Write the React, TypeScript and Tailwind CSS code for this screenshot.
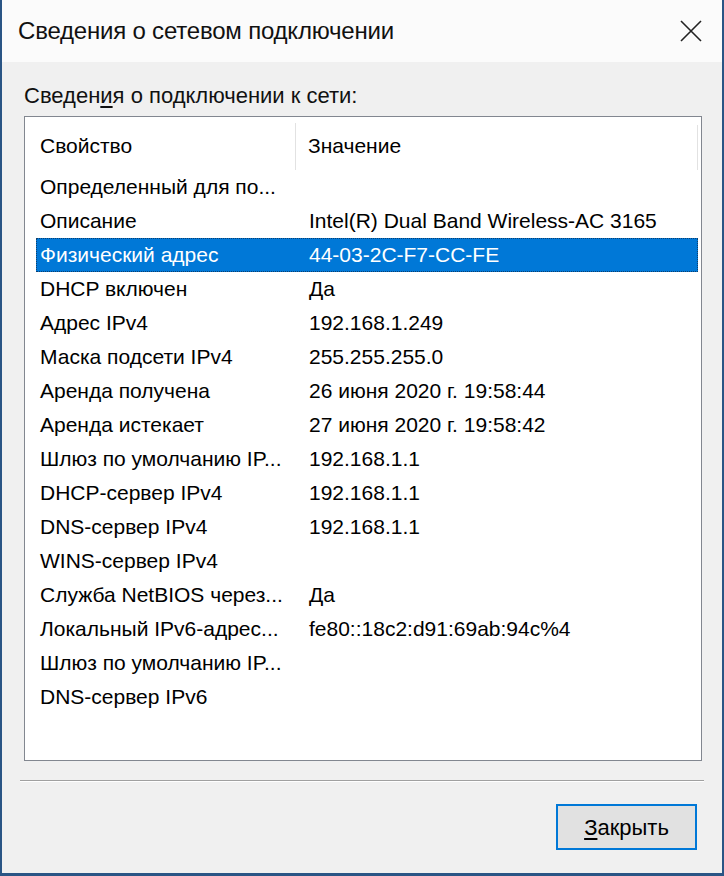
import React from "react";

const rows: [string, string][] = [
  ["Определенный для по...", ""],
  ["Описание", "Intel(R) Dual Band Wireless-AC 3165"],
  ["Физический адрес", "44-03-2C-F7-CC-FE"],
  ["DHCP включен", "Да"],
  ["Адрес IPv4", "192.168.1.249"],
  ["Маска подсети IPv4", "255.255.255.0"],
  ["Аренда получена", "26 июня 2020 г. 19:58:44"],
  ["Аренда истекает", "27 июня 2020 г. 19:58:42"],
  ["Шлюз по умолчанию IP...", "192.168.1.1"],
  ["DHCP-сервер IPv4", "192.168.1.1"],
  ["DNS-сервер IPv4", "192.168.1.1"],
  ["WINS-сервер IPv4", ""],
  ["Служба NetBIOS через...", "Да"],
  ["Локальный IPv6-адрес...", "fe80::18c2:d91:69ab:94c%4"],
  ["Шлюз по умолчанию IP...", ""],
  ["DNS-сервер IPv6", ""],
];

export default function App() {
  return (
    <div
      className="w-[724px] h-[876px] flex flex-col bg-[#f0f0f0] border-x-2 border-b-[3px] border-[#2a5585] text-[#000]"
      style={{ fontFamily: '"Liberation Sans", Arial, sans-serif' }}
    >
      {/* Title bar */}
      <div className="h-[62px] bg-[#fbfbfb] flex items-center justify-between pl-[16px] pr-[18px] shrink-0">
        <span className="text-[24px] tracking-[-0.2px] text-[#111]">Сведения о сетевом подключении</span>
        <svg width="22" height="22" viewBox="0 0 22 22" className="mr-[2px]">
          <path d="M1 1 L21 21 M21 1 L1 21" stroke="#222" strokeWidth="1.6" fill="none" />
        </svg>
      </div>

      {/* Body */}
      <div className="flex-1 flex flex-col px-[22px]">
        <div className="pt-[21px] h-[54px] text-[22px] leading-[26px] text-[#111]">
          Сведен<span className="underline underline-offset-[3px]">и</span>я о подключении к сети:
        </div>

        {/* List box */}
        <div className="w-[678px] h-[645px] bg-white border border-[#828790] flex flex-col">
          {/* Header */}
          <div className="h-[53px] flex items-stretch shrink-0">
            <div className="w-[270px] pl-[15px] flex items-center pt-[4px] text-[21px]">Свойство</div>
            <div className="w-[1px] bg-[#e2e2e2] mt-[6px] mb-0" />
            <div className="flex-1 pl-[12px] flex items-center pt-[4px] text-[21px]">Значение</div>
            <div className="w-[1px] bg-[#e2e2e2] mt-[8px] mr-[3px]" />
          </div>
          {/* Rows */}
          <div className="flex flex-col">
            {rows.map(([k, v], i) => {
              const sel = i === 2;
              return (
                <div
                  key={i}
                  className={
                    sel
                      ? "h-[34px] ml-[11px] mr-[3px] flex items-center bg-[#0078d7] text-white border border-dotted border-[#0d3f6e]"
                      : "h-[34px] ml-[11px] mr-[3px] flex items-center border border-transparent"
                  }
                >
                  <div className="w-[272px] pl-[3px] text-[21px] whitespace-nowrap">{k}</div>
                  <div className="flex-1 text-[21px] whitespace-nowrap">{v}</div>
                </div>
              );
            })}
          </div>
        </div>

        {/* Separator */}
        <div className="mt-[19px] mx-[-4px] h-[2px] border-t border-[#a0a0a0] border-b-white border-b" />

        {/* Button */}
        <div className="flex justify-end mt-[22px] mr-[3px]">
          <button className="w-[141px] h-[46px] bg-[#e1e1e1] border-2 border-[#0078d7] text-[22px] flex items-center justify-center">
            <span>
              <span className="underline underline-offset-[3px]">З</span>акрыть
            </span>
          </button>
        </div>
      </div>
    </div>
  );
}
